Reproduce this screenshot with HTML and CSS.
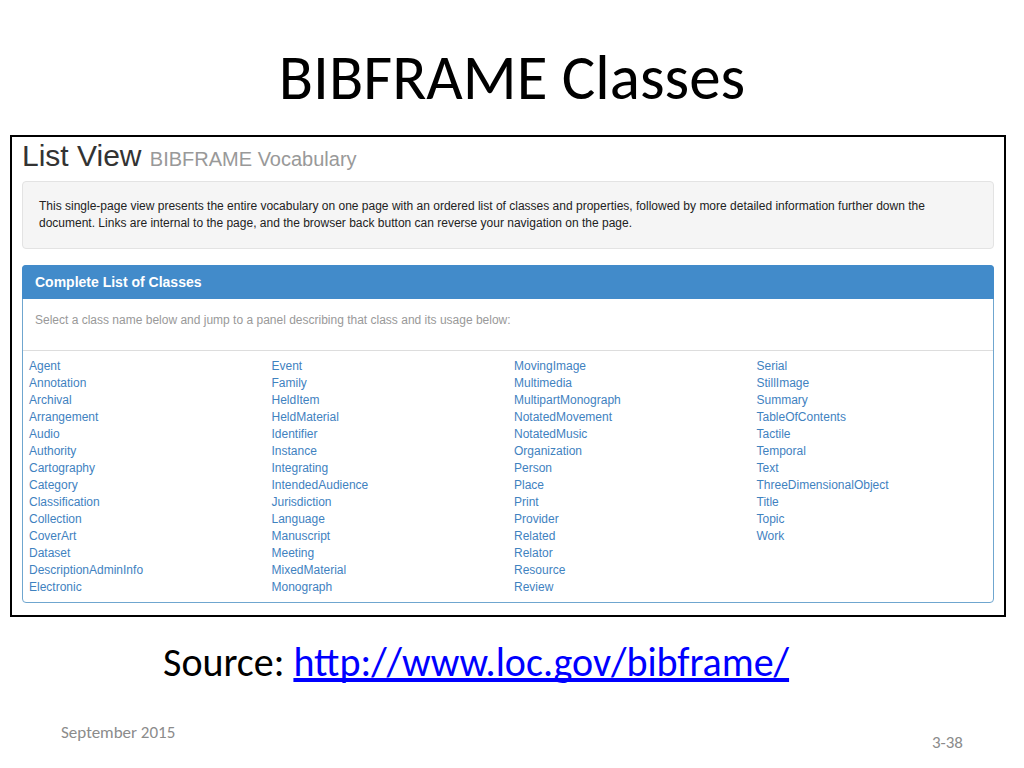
FILE: index.html
```html
<!DOCTYPE html>
<html lang="en">
<head>
  <meta charset="UTF-8">
  <meta name="viewport" content="width=device-width, initial-scale=1.0">
  <title>BIBFRAME Classes</title>
  <link rel="stylesheet" href="styles.css">
</head>
<body>
  <main class="slide">
    <h1 class="slide-title">BIBFRAME Classes</h1>
    <section class="vocab">
      <h2 class="vocab-title">List View <small>BIBFRAME Vocabulary</small></h2>
      <div class="well">This single-page view presents the entire vocabulary on one page with an ordered list of classes and properties, followed by more detailed information further down the document. Links are internal to the page, and the browser back button can reverse your navigation on the page.</div>
      <div class="panel">
        <h3 class="panel-heading">Complete List of Classes</h3>
        <p class="panel-body">Select a class name below and jump to a panel describing that class and its usage below:</p>
        <div class="columns">
          <ul>
            <li><a href="#Agent">Agent</a></li>
            <li><a href="#Annotation">Annotation</a></li>
            <li><a href="#Archival">Archival</a></li>
            <li><a href="#Arrangement">Arrangement</a></li>
            <li><a href="#Audio">Audio</a></li>
            <li><a href="#Authority">Authority</a></li>
            <li><a href="#Cartography">Cartography</a></li>
            <li><a href="#Category">Category</a></li>
            <li><a href="#Classification">Classification</a></li>
            <li><a href="#Collection">Collection</a></li>
            <li><a href="#CoverArt">CoverArt</a></li>
            <li><a href="#Dataset">Dataset</a></li>
            <li><a href="#DescriptionAdminInfo">DescriptionAdminInfo</a></li>
            <li><a href="#Electronic">Electronic</a></li>
          </ul>
          <ul>
            <li><a href="#Event">Event</a></li>
            <li><a href="#Family">Family</a></li>
            <li><a href="#HeldItem">HeldItem</a></li>
            <li><a href="#HeldMaterial">HeldMaterial</a></li>
            <li><a href="#Identifier">Identifier</a></li>
            <li><a href="#Instance">Instance</a></li>
            <li><a href="#Integrating">Integrating</a></li>
            <li><a href="#IntendedAudience">IntendedAudience</a></li>
            <li><a href="#Jurisdiction">Jurisdiction</a></li>
            <li><a href="#Language">Language</a></li>
            <li><a href="#Manuscript">Manuscript</a></li>
            <li><a href="#Meeting">Meeting</a></li>
            <li><a href="#MixedMaterial">MixedMaterial</a></li>
            <li><a href="#Monograph">Monograph</a></li>
          </ul>
          <ul>
            <li><a href="#MovingImage">MovingImage</a></li>
            <li><a href="#Multimedia">Multimedia</a></li>
            <li><a href="#MultipartMonograph">MultipartMonograph</a></li>
            <li><a href="#NotatedMovement">NotatedMovement</a></li>
            <li><a href="#NotatedMusic">NotatedMusic</a></li>
            <li><a href="#Organization">Organization</a></li>
            <li><a href="#Person">Person</a></li>
            <li><a href="#Place">Place</a></li>
            <li><a href="#Print">Print</a></li>
            <li><a href="#Provider">Provider</a></li>
            <li><a href="#Related">Related</a></li>
            <li><a href="#Relator">Relator</a></li>
            <li><a href="#Resource">Resource</a></li>
            <li><a href="#Review">Review</a></li>
          </ul>
          <ul>
            <li><a href="#Serial">Serial</a></li>
            <li><a href="#StillImage">StillImage</a></li>
            <li><a href="#Summary">Summary</a></li>
            <li><a href="#TableOfContents">TableOfContents</a></li>
            <li><a href="#Tactile">Tactile</a></li>
            <li><a href="#Temporal">Temporal</a></li>
            <li><a href="#Text">Text</a></li>
            <li><a href="#ThreeDimensionalObject">ThreeDimensionalObject</a></li>
            <li><a href="#Title">Title</a></li>
            <li><a href="#Topic">Topic</a></li>
            <li><a href="#Work">Work</a></li>
          </ul>
        </div>
      </div>
    </section>
    <p class="source">Source: <a href="http://www.loc.gov/bibframe/">http://www.loc.gov/bibframe/</a></p>
    <footer class="slide-footer">
      <span>September 2015</span>
      <span class="page-number">3-38</span>
    </footer>
  </main>
</body>
</html>
```
FILE: styles.css
```css
* {
  box-sizing: border-box;
}
body {
  margin: 0;
  background: #fff;
  color: #000;
  font-family: Carlito, Lato, sans-serif;
}
.slide {
  padding-top: 42px;
}
.slide-title {
  margin: 0;
  padding-bottom: 21px;
  font-size: 63px;
  font-weight: normal;
  line-height: 72px;
  text-align: center;
}
.vocab {
  margin: 0 18px 0 10px;
  padding: 3px 10px 12px;
  border: 2px solid #000;
  font-family: "Liberation Sans", Arial, sans-serif;
  font-size: 12px;
  line-height: 17px;
}
.vocab-title {
  margin: 0 0 6px;
  color: #333;
  font-size: 30px;
  font-weight: normal;
  line-height: 32px;
}
.vocab-title small {
  color: #999;
  font-size: 20px;
}
.well {
  margin-bottom: 16px;
  padding: 16px;
  background: #f5f5f5;
  border: 1px solid #e3e3e3;
  border-radius: 4px;
  color: #222;
}
.panel {
  border: 1px solid #6fa6cf;
  border-radius: 4px;
}
.panel-heading {
  margin: -1px -1px 0;
  padding: 9px 13px 8px;
  background: #428bca;
  border-radius: 4px 4px 0 0;
  color: #fff;
  font-size: 14px;
  line-height: 17px;
}
.panel-body {
  margin: 0;
  padding: 13px 12px 21px;
  border-bottom: 1px solid #ddd;
  color: #999;
}
.columns {
  display: grid;
  grid-template-columns: repeat(4, 1fr);
  padding: 7px 0 6px;
}
.columns ul {
  margin: 0;
  padding: 0 6px;
  list-style: none;
}
.columns a {
  color: #3f82bf;
  text-decoration: none;
}
.source {
  margin: 0;
  padding: 22px 0 26px 163px;
  font-size: 40px;
  line-height: 48px;
}
.source a {
  color: #00f;
  text-decoration-skip-ink: none;
}
.slide-footer {
  display: flex;
  justify-content: space-between;
  padding: 10px 61px 0;
  color: #8b8b8b;
  font-size: 17px;
  line-height: 20px;
}
.page-number {
  padding-top: 10px;
}
```
